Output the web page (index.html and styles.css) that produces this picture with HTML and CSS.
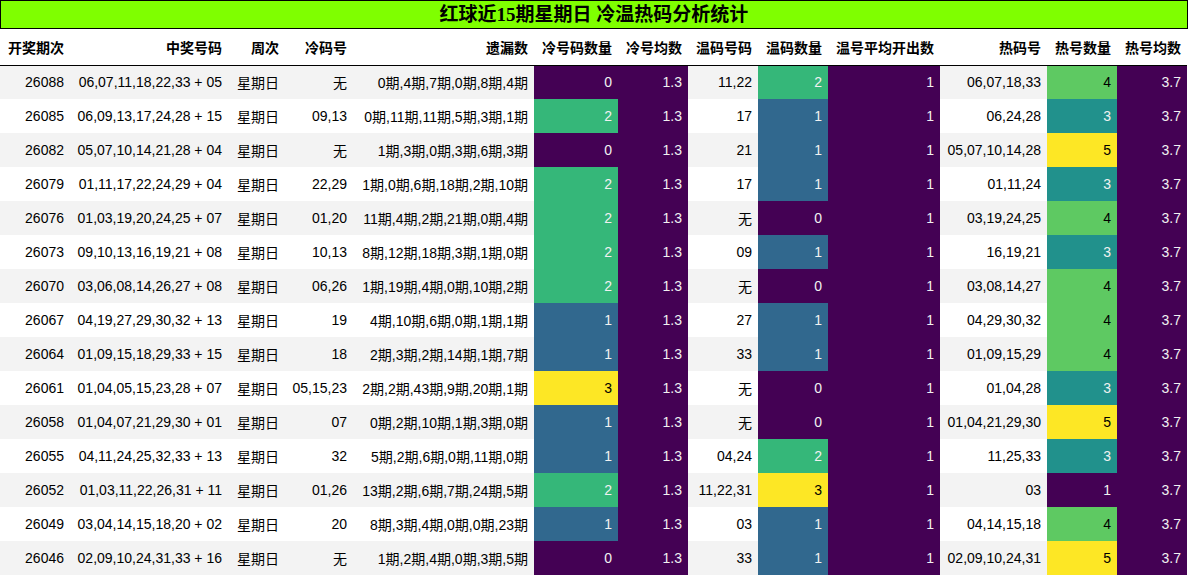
FILE: index.html
```html
<!DOCTYPE html>
<html lang="zh">
<head>
<meta charset="utf-8">
<title>红球近15期星期日 冷温热码分析统计</title>
<link rel="stylesheet" href="styles.css">
</head>
<body>
<div class="page">
  <div class="title">红球近15期星期日 冷温热码分析统计</div>
  <table class="stats">
    <colgroup>
      <col class="w70"><col class="w158"><col class="w57"><col class="w68"><col class="w181"><col class="w84"><col class="w70"><col class="w70"><col class="w70"><col class="w112"><col class="w107"><col class="w70"><col class="w70">
    </colgroup>
    <thead>
      <tr><th>开奖期次</th><th>中奖号码</th><th>周次</th><th>冷码号</th><th>遗漏数</th><th>冷号码数量</th><th>冷号均数</th><th>温码号码</th><th>温码数量</th><th>温号平均开出数</th><th>热码号</th><th>热号数量</th><th>热号均数</th></tr>
    </thead>
    <tbody>
      <tr><td>26088</td><td>06,07,11,18,22,33 + 05</td><td>星期日</td><td>无</td><td>0期,4期,7期,0期,8期,4期</td><td class="v0">0</td><td class="v0">1.3</td><td>11,22</td><td class="v2">2</td><td class="v0">1</td><td>06,07,18,33</td><td class="h4">4</td><td class="v0">3.7</td></tr>
      <tr><td>26085</td><td>06,09,13,17,24,28 + 15</td><td>星期日</td><td>09,13</td><td>0期,11期,11期,5期,3期,1期</td><td class="v2">2</td><td class="v0">1.3</td><td>17</td><td class="v1">1</td><td class="v0">1</td><td>06,24,28</td><td class="h3">3</td><td class="v0">3.7</td></tr>
      <tr><td>26082</td><td>05,07,10,14,21,28 + 04</td><td>星期日</td><td>无</td><td>1期,3期,0期,3期,6期,3期</td><td class="v0">0</td><td class="v0">1.3</td><td>21</td><td class="v1">1</td><td class="v0">1</td><td>05,07,10,14,28</td><td class="h5">5</td><td class="v0">3.7</td></tr>
      <tr><td>26079</td><td>01,11,17,22,24,29 + 04</td><td>星期日</td><td>22,29</td><td>1期,0期,6期,18期,2期,10期</td><td class="v2">2</td><td class="v0">1.3</td><td>17</td><td class="v1">1</td><td class="v0">1</td><td>01,11,24</td><td class="h3">3</td><td class="v0">3.7</td></tr>
      <tr><td>26076</td><td>01,03,19,20,24,25 + 07</td><td>星期日</td><td>01,20</td><td>11期,4期,2期,21期,0期,4期</td><td class="v2">2</td><td class="v0">1.3</td><td>无</td><td class="v0">0</td><td class="v0">1</td><td>03,19,24,25</td><td class="h4">4</td><td class="v0">3.7</td></tr>
      <tr><td>26073</td><td>09,10,13,16,19,21 + 08</td><td>星期日</td><td>10,13</td><td>8期,12期,18期,3期,1期,0期</td><td class="v2">2</td><td class="v0">1.3</td><td>09</td><td class="v1">1</td><td class="v0">1</td><td>16,19,21</td><td class="h3">3</td><td class="v0">3.7</td></tr>
      <tr><td>26070</td><td>03,06,08,14,26,27 + 08</td><td>星期日</td><td>06,26</td><td>1期,19期,4期,0期,10期,2期</td><td class="v2">2</td><td class="v0">1.3</td><td>无</td><td class="v0">0</td><td class="v0">1</td><td>03,08,14,27</td><td class="h4">4</td><td class="v0">3.7</td></tr>
      <tr><td>26067</td><td>04,19,27,29,30,32 + 13</td><td>星期日</td><td>19</td><td>4期,10期,6期,0期,1期,1期</td><td class="v1">1</td><td class="v0">1.3</td><td>27</td><td class="v1">1</td><td class="v0">1</td><td>04,29,30,32</td><td class="h4">4</td><td class="v0">3.7</td></tr>
      <tr><td>26064</td><td>01,09,15,18,29,33 + 15</td><td>星期日</td><td>18</td><td>2期,3期,2期,14期,1期,7期</td><td class="v1">1</td><td class="v0">1.3</td><td>33</td><td class="v1">1</td><td class="v0">1</td><td>01,09,15,29</td><td class="h4">4</td><td class="v0">3.7</td></tr>
      <tr><td>26061</td><td>01,04,05,15,23,28 + 07</td><td>星期日</td><td>05,15,23</td><td>2期,2期,43期,9期,20期,1期</td><td class="v3">3</td><td class="v0">1.3</td><td>无</td><td class="v0">0</td><td class="v0">1</td><td>01,04,28</td><td class="h3">3</td><td class="v0">3.7</td></tr>
      <tr><td>26058</td><td>01,04,07,21,29,30 + 01</td><td>星期日</td><td>07</td><td>0期,2期,10期,1期,3期,0期</td><td class="v1">1</td><td class="v0">1.3</td><td>无</td><td class="v0">0</td><td class="v0">1</td><td>01,04,21,29,30</td><td class="h5">5</td><td class="v0">3.7</td></tr>
      <tr><td>26055</td><td>04,11,24,25,32,33 + 13</td><td>星期日</td><td>32</td><td>5期,2期,6期,0期,11期,0期</td><td class="v1">1</td><td class="v0">1.3</td><td>04,24</td><td class="v2">2</td><td class="v0">1</td><td>11,25,33</td><td class="h3">3</td><td class="v0">3.7</td></tr>
      <tr><td>26052</td><td>01,03,11,22,26,31 + 11</td><td>星期日</td><td>01,26</td><td>13期,2期,6期,7期,24期,5期</td><td class="v2">2</td><td class="v0">1.3</td><td>11,22,31</td><td class="v3">3</td><td class="v0">1</td><td>03</td><td class="v0">1</td><td class="v0">3.7</td></tr>
      <tr><td>26049</td><td>03,04,14,15,18,20 + 02</td><td>星期日</td><td>20</td><td>8期,3期,4期,0期,0期,23期</td><td class="v1">1</td><td class="v0">1.3</td><td>03</td><td class="v1">1</td><td class="v0">1</td><td>04,14,15,18</td><td class="h4">4</td><td class="v0">3.7</td></tr>
      <tr><td>26046</td><td>02,09,10,24,31,33 + 16</td><td>星期日</td><td>无</td><td>1期,2期,4期,0期,3期,5期</td><td class="v0">0</td><td class="v0">1.3</td><td>33</td><td class="v1">1</td><td class="v0">1</td><td>02,09,10,24,31</td><td class="h5">5</td><td class="v0">3.7</td></tr>
    </tbody>
  </table>
</div>
</body>
</html>
```

FILE: styles.css
```css
html, body {
  margin: 0;
  padding: 0;
  background: #ffffff;
}

.page {
  width: 1188px;
  font-family: "Liberation Sans", "Noto Sans CJK SC", sans-serif;
  color: #000;
}

.title {
  box-sizing: border-box;
  height: 29px;
  border: 1px solid #000;
  background: #7fff00;
  text-align: center;
  font-family: "Liberation Serif", "Noto Sans CJK SC", serif;
  font-weight: bold;
  font-size: 19px;
  line-height: 27px;
}

.stats {
  width: 1187px;
  table-layout: fixed;
  border-collapse: collapse;
  border-spacing: 0;
  font-size: 14px;
}

.w70 { width: 70px; }
.w158 { width: 158px; }
.w57 { width: 57px; }
.w68 { width: 68px; }
.w181 { width: 181px; }
.w84 { width: 84px; }
.w112 { width: 112px; }
.w107 { width: 107px; }

.stats th {
  height: 36px;
  box-sizing: border-box;
  padding: 0 6px 0 0;
  text-align: right;
  font-weight: bold;
  white-space: nowrap;
  border-bottom: 1px solid #000;
  background: #fff;
}

.stats td {
  height: 34px;
  box-sizing: border-box;
  padding: 0 6px 0 0;
  text-align: right;
  white-space: nowrap;
  overflow: hidden;
}

.stats tbody tr:nth-child(odd) td { background: #f3f3f3; }
.stats tbody tr:nth-child(even) td { background: #ffffff; }

.stats tbody tr td.v0 { background: #440154; color: #f1f1f1; }
.stats tbody tr td.v1 { background: #31688e; color: #f1f1f1; }
.stats tbody tr td.v2 { background: #35b779; color: #f1f1f1; }
.stats tbody tr td.v3 { background: #fde725; color: #000; }
.stats tbody tr td.h3 { background: #21918c; color: #f1f1f1; }
.stats tbody tr td.h4 { background: #5ec962; color: #000; }
.stats tbody tr td.h5 { background: #fde725; color: #000; }
```
